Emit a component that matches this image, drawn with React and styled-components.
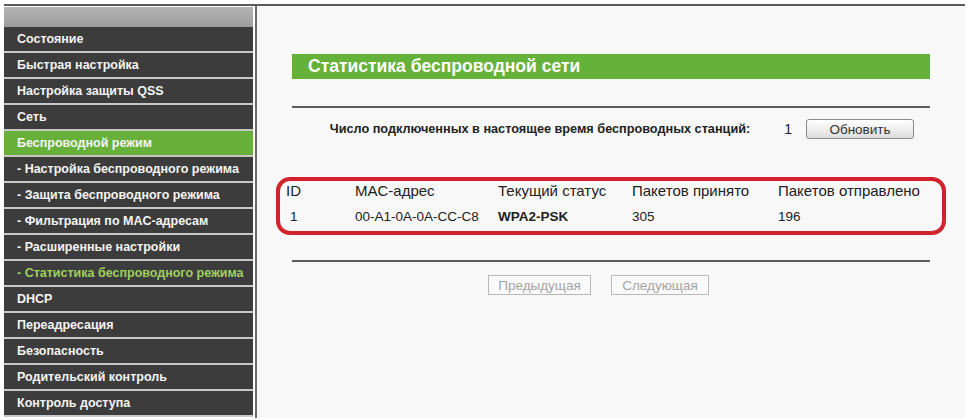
import React from "react"
import styled, { createGlobalStyle } from "styled-components"

const GlobalStyle = createGlobalStyle`
  body {
    margin: 0;
    background: #fff;
    font-family: "Liberation Sans", Arial, sans-serif;
  }
`

const Frame = styled.div`
  display: flex;
  margin: 4px 0 0 4px;
  width: 961px;
  height: 412px;
  border-top: 2px solid #5a5a5a;
  overflow: hidden;
`

const Sidebar = styled.nav`
  width: 249px;
  margin-top: 1px;
  display: flex;
  flex-direction: column;
  flex-shrink: 0;
`

const SideHead = styled.div`
  height: 20px;
  background: linear-gradient(#b4b4b4, #9c9c9c);
`

const MenuItem = styled.div`
  height: 24px;
  border-bottom: 2px solid #c8c8c8;
  background: ${p => (p.$active ? "#67b13b" : "#3c3c3c")};
  color: ${p => (p.$current ? "#9fd05e" : "#f4f4f4")};
  font-size: 12.5px;
  font-weight: bold;
  line-height: 24px;
  padding-left: 13px;
  white-space: nowrap;
`

const Content = styled.main`
  flex: 1;
  margin-left: 2px;
  border-left: 2px solid #6a6a6a;
  background: #f8f8f8;
  padding: 48px 35px 0 35px;
  display: flex;
  flex-direction: column;
`

const TitleBar = styled.div`
  height: 25px;
  background: #65b23b;
  color: #fff;
  font-size: 17.5px;
  font-weight: bold;
  line-height: 25px;
  padding-left: 16px;
`

const Rule = styled.div`
  height: 2px;
  background: #5c5c5c;
  margin-top: ${p => p.$top}px;
`

const StatRow = styled.div`
  display: flex;
  align-items: center;
  justify-content: flex-end;
  height: 20px;
  margin-top: 11px;
  padding-right: 16px;
  color: #222;
`

const StatLabel = styled.span`
  font-size: 12.7px;
  font-weight: bold;
  margin-right: 34px;
`

const StatValue = styled.span`
  font-size: 14px;
  margin-right: 14px;
`

const Button = styled.button`
  height: 20px;
  width: ${p => p.$w}px;
  padding: 0;
  border: 1px solid ${p => (p.disabled ? "#b8b8b8" : "#8a8a8a")};
  border-radius: ${p => (p.disabled ? 0 : 3)}px;
  background: ${p => (p.disabled ? "#fafafa" : "linear-gradient(#ffffff, #dedede)")};
  color: ${p => (p.disabled ? "#a4a4a4" : "#333")};
  font-family: "Liberation Sans", Arial, sans-serif;
  font-size: 13.5px;
`

const StatsBox = styled.div`
  margin: 38px -16px 0 -16px;
  border: 4px solid #d2222d;
  border-radius: 14px;
  padding: 0 0 5px 6px;
  display: grid;
  grid-template-columns: 69px 143px 134px 146px 1fr;
  grid-auto-rows: 19px;
  row-gap: 7px;
  align-items: center;
  color: #222;
`

const Cell = styled.div`
  white-space: nowrap;
  font-size: ${p => (p.$head ? 15 : 13.5)}px;
  padding-left: ${p => (p.$num ? 4 : 0)}px;
  font-weight: ${p => (p.$bold ? "bold" : "normal")};
`

const Pager = styled.div`
  display: flex;
  gap: 20px;
  margin-top: 13px;
  padding-left: 196px;
`

const menu = [
  { label: "Состояние" },
  { label: "Быстрая настройка" },
  { label: "Настройка защиты QSS" },
  { label: "Сеть" },
  { label: "Беспроводной режим", active: true },
  { label: "- Настройка беспроводного режима" },
  { label: "- Защита беспроводного режима" },
  { label: "- Фильтрация по MAC-адресам" },
  { label: "- Расширенные настройки" },
  { label: "- Статистика беспроводного режима", current: true },
  { label: "DHCP" },
  { label: "Переадресация" },
  { label: "Безопасность" },
  { label: "Родительский контроль" },
  { label: "Контроль доступа" },
]

const headers = ["ID", "MAC-адрес", "Текущий статус", "Пакетов принято", "Пакетов отправлено"]
const stations = [["1", "00-A1-0A-0A-CC-C8", "WPA2-PSK", "305", "196"]]

export default function App() {
  return (
    <>
      <GlobalStyle />
      <Frame>
        <Sidebar>
          <SideHead />
          {menu.map(m => (
            <MenuItem key={m.label} $active={m.active} $current={m.current}>
              {m.label}
            </MenuItem>
          ))}
        </Sidebar>
        <Content>
          <TitleBar>Статистика беспроводной сети</TitleBar>
          <Rule $top={27} />
          <StatRow>
            <StatLabel>Число подключенных в настоящее время беспроводных станций:</StatLabel>
            <StatValue>1</StatValue>
            <Button $w={108}>Обновить</Button>
          </StatRow>
          <StatsBox>
            {headers.map(h => (
              <Cell key={h} $head>{h}</Cell>
            ))}
            {stations.map(row =>
              row.map((v, i) => (
                <Cell key={i} $num={i === 0} $bold={i === 2}>
                  {v}
                </Cell>
              ))
            )}
          </StatsBox>
          <Rule $top={25} />
          <Pager>
            <Button $w={103} disabled>Предыдущая</Button>
            <Button $w={98} disabled>Следующая</Button>
          </Pager>
        </Content>
      </Frame>
    </>
  )
}
